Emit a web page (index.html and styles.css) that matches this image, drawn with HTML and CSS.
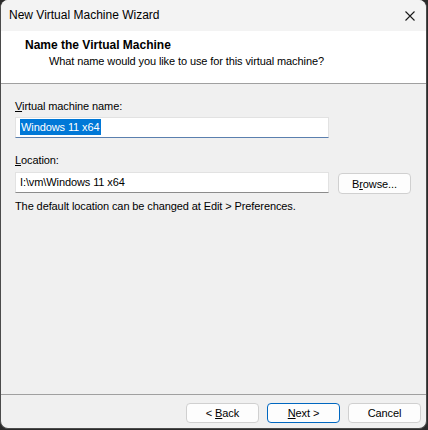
FILE: index.html
```html
<!DOCTYPE html>
<html lang="en">

<head>
    <meta charset="UTF-8">
    <meta name="viewport" content="width=device-width, initial-scale=1.0">
    <title>New Virtual Machine Wizard</title>
    <link rel="stylesheet" href="styles.css">
</head>

<body>
    <div class="window">
        <div class="titlebar">
            <span class="title">New Virtual Machine Wizard</span>
            <svg class="close" width="10" height="10" viewBox="0 0 10 10">
                <path d="M0.5 0.5 L9.5 9.5 M9.5 0.5 L0.5 9.5" stroke="#1a1a1a" stroke-width="1.1" fill="none"/>
            </svg>
        </div>

        <div class="wizard-header">
            <div class="step-title">Name the Virtual Machine</div>
            <div class="step-desc">What name would you like to use for this virtual machine?</div>
        </div>

        <div class="wizard-body">
            <label class="field-label"><u>V</u>irtual machine name:</label>
            <div class="textbox focused"><span class="selected">Windows 11 x64</span></div>

            <label class="field-label location-label"><u>L</u>ocation:</label>
            <div class="location-row">
                <div class="textbox">I:\vm\Windows 11 x64</div>
                <button class="btn browse">B<u>r</u>owse...</button>
            </div>
            <p class="hint">The default location can be changed at Edit &gt; Preferences.</p>
        </div>

        <div class="wizard-footer">
            <button class="btn">&lt; <u>B</u>ack</button>
            <button class="btn default"><u>N</u>ext &gt;</button>
            <button class="btn">Cancel</button>
        </div>
    </div>
</body>

</html>
```

FILE: styles.css
```css
body {
    margin: 0;
    background-color: #2a2a2a;
    font-family: 'Liberation Sans', Arial, sans-serif;
    font-size: 11px;
    letter-spacing: -0.1px;
    color: #000;
}

.window {
    box-sizing: border-box;
    width: 427px;
    height: 429px;
    background-color: #f0f0f0;
    border: 1px solid #4b4b4b;
    border-top: none;
    border-radius: 8px;
    overflow: hidden;
    display: flex;
    flex-direction: column;
}

.titlebar {
    height: 31px;
    flex-shrink: 0;
    background-color: #f3f3f3;
    display: flex;
    align-items: center;
    justify-content: space-between;
    padding: 0 8px 0 8px;
}

.title {
    font-size: 12px;
    letter-spacing: 0;
    line-height: 15px;
}

.close {
    margin-right: 3px;
}

.wizard-header {
    box-sizing: border-box;
    height: 53px;
    flex-shrink: 0;
    background-color: #fff;
    border-bottom: 1px solid #a0a0a0;
    padding: 7px 0 0 24px;
    line-height: 15px;
}

.step-title {
    font-size: 12px;
    font-weight: bold;
    letter-spacing: 0;
}

.step-desc {
    margin-top: 1px;
    padding-left: 24px;
}

.wizard-body {
    flex: 1;
    padding: 15px 0 0 14px;
    display: flex;
    flex-direction: column;
    align-items: flex-start;
}

.field-label {
    line-height: 15px;
    margin-bottom: 3px;
}

.location-label {
    margin-top: 15px;
    margin-bottom: 4px;
}

.textbox {
    box-sizing: border-box;
    width: 314px;
    height: 21px;
    background-color: #fff;
    border: 1px solid #e2e2e2;
    border-bottom-color: #8c8c8c;
    padding: 0 4px;
    line-height: 19px;
    white-space: nowrap;
}

.textbox.focused {
    border-bottom-color: #5a7fae;
}

.selected {
    background-color: #0078d7;
    color: #fff;
    padding: 2px 1px;
}

.location-row {
    display: flex;
    gap: 9px;
}

.hint {
    margin: 5px 0 0 0;
    line-height: 15px;
}

.btn {
    box-sizing: border-box;
    width: 73px;
    height: 20px;
    padding: 0;
    background-color: #fdfdfd;
    border: 1px solid #d0d0d0;
    border-radius: 4px;
    font-family: inherit;
    font-size: 11px;
    letter-spacing: inherit;
    color: #000;
    line-height: 16px;
}

.browse {
    height: 21px;
    margin-top: 1px;
}

.btn.default {
    border-color: #0067c0;
}

.wizard-footer {
    box-sizing: border-box;
    height: 34px;
    flex-shrink: 0;
    border-top: 1px solid #a0a0a0;
    padding: 8px 5px 0 0;
    display: flex;
    justify-content: flex-end;
    align-items: flex-start;
    gap: 8px;
}
```
